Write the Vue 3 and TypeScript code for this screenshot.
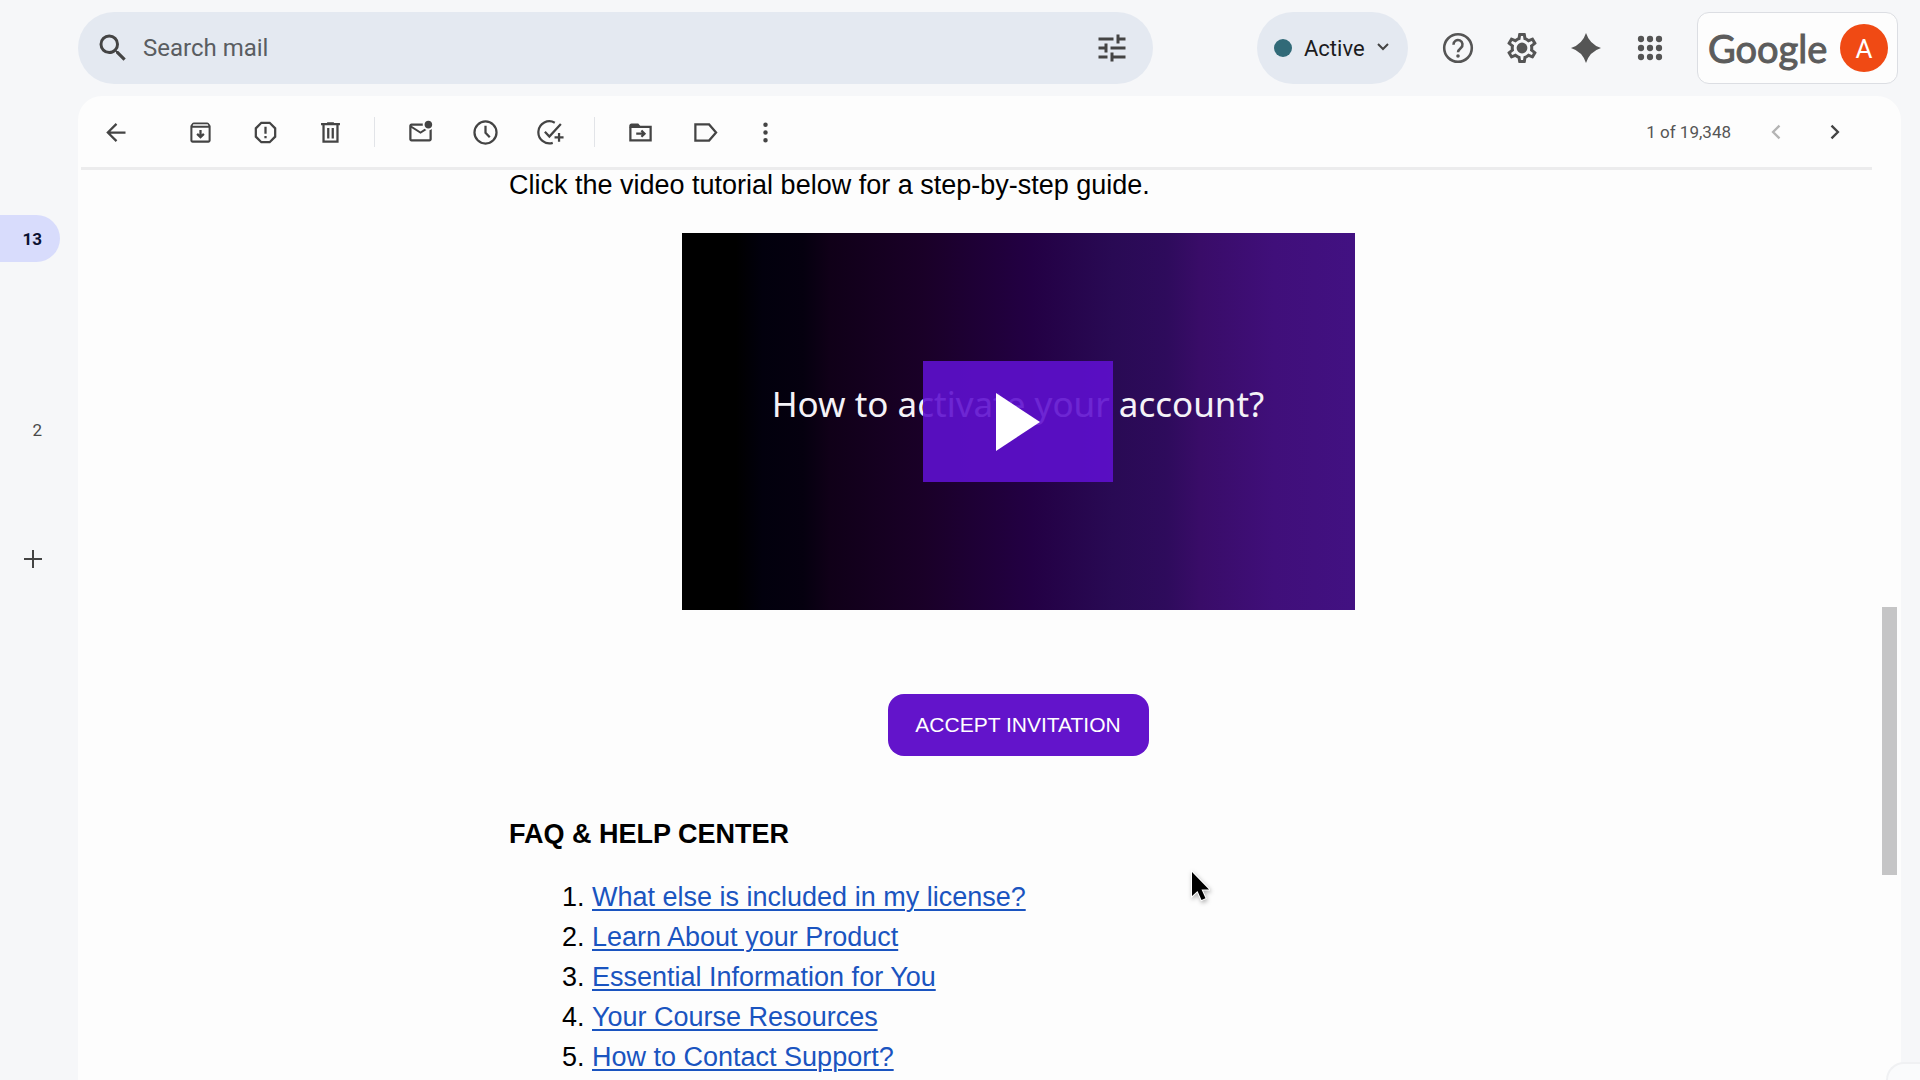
<script setup lang="ts">
import { ref } from 'vue'

interface ToolIcon {
  label: string
  fill?: string
  stroke?: string
}

const query = ref('')

const toolGroups: ToolIcon[][] = [
  [
    {
      label: 'Archive',
      fill: 'M20.54 5.23l-1.39-1.68C18.88 3.21 18.47 3 18 3H6c-.47 0-.88.21-1.16.55L3.46 5.23C3.17 5.57 3 6.02 3 6.5V19c0 1.1.9 2 2 2h14c1.1 0 2-.9 2-2V6.5c0-.48-.17-.93-.46-1.27zM5.6 4.7h12.8l.6 1.3H5l.6-1.3zM4.8 19.2V7.8h14.4v11.4z',
      stroke: 'M12 9.8v6M9 13.2l3 3 3-3',
    },
    {
      label: 'Report spam',
      stroke: 'M8.3 3.4h7.4l4.9 4.9v7.4l-4.9 4.9H8.3l-4.9-4.9V8.3zM12 6.8v6.4M12 15.2v1.8',
    },
    {
      label: 'Delete',
      stroke: 'M3.6 4.6h16.8M9 3.9h6M5.8 5v15.2h12.4V5M10 8v9.4M14 8v9.4',
    },
  ],
  [
    {
      label: 'Mark as unread',
      fill: 'M22 8.98V18c0 1.1-.9 2-2 2H4c-1.1 0-2-.9-2-2V6c0-1.1.9-2 2-2h10.1c-.06.32-.1.66-.1 1 0 .34.04.68.1 1H4l8 5 3.67-2.29c.47.43 1.02.76 1.63.98L12 13 4 8v10h16V9.9c.74-.15 1.42-.48 2-.92zM15.6 5c0 1.9 1.5 3.4 3.4 3.4s3.4-1.5 3.4-3.4-1.5-3.4-3.4-3.4-3.4 1.5-3.4 3.4z',
    },
    {
      label: 'Snooze',
      stroke: 'M12 2.2a9.8 9.8 0 1 0 0 19.6a9.8 9.8 0 1 0 0-19.6zM12 6v6.2l3.8 4',
    },
    {
      label: 'Add to tasks',
      stroke: 'M15.8 3.3A9.8 9.8 0 1 0 14 21.2M7 11.4l4 4.2L21.2 4.4M19.6 12.4v7.8M15.6 16.3h8',
    },
  ],
  [
    {
      label: 'Move to',
      fill: 'M2 6c0-1.1.9-2 2-2h6l2 2.4H10v1.6H2z',
      stroke: 'M3 7.5V19h18V7H3M8.2 13h7M12.8 10.2l2.8 2.8-2.8 2.8',
    },
    { label: 'Labels', stroke: 'M3 4.8h12.2L21.4 12l-6.2 7.2H3z' },
    {
      label: 'More',
      fill: 'M12 3.2a2 2 0 1 0 0 4a2 2 0 1 0 0-4zM12 10a2 2 0 1 0 0 4a2 2 0 1 0 0-4zM12 16.8a2 2 0 1 0 0 4a2 2 0 1 0 0-4z',
    },
  ],
]

const gear =
  'M19.43 12.98c.04-.32.07-.64.07-.98 0-.34-.03-.66-.07-.98l2.11-1.65c.19-.15.24-.42.12-.64l-2-3.46c-.09-.16-.26-.25-.44-.25-.06 0-.12.01-.17.03l-2.49 1c-.52-.4-1.08-.73-1.69-.98l-.38-2.65C14.46 2.18 14.25 2 14 2h-4c-.25 0-.46.18-.49.42l-.38 2.65c-.61.25-1.17.59-1.69.98l-2.49-1c-.06-.02-.12-.03-.18-.03-.17 0-.34.09-.43.25l-2 3.46c-.13.22-.07.49.12.64l2.11 1.65c-.04.32-.07.65-.07.98 0 .33.03.66.07.98l-2.11 1.65c-.19.15-.24.42-.12.64l2 3.46c.09.16.26.25.44.25.06 0 .12-.01.17-.03l2.49-1c.52.4 1.08.73 1.69.98l.38 2.65c.03.24.24.42.49.42h4c.25 0 .46-.18.49-.42l.38-2.65c.61-.25 1.17-.59 1.69-.98l2.49 1c.06.02.12.03.18.03.17 0 .34-.09.43-.25l2-3.46c.12-.22.07-.49-.12-.64l-2.11-1.65zm-1.98-1.71c.04.31.05.52.05.73 0 .21-.02.43-.05.73l-.14 1.13.89.7 1.08.84-.7 1.21-1.27-.51-1.04-.42-.9.68c-.43.32-.84.56-1.25.73l-1.06.43-.16 1.13-.2 1.35h-1.4l-.19-1.35-.16-1.13-1.06-.43c-.43-.18-.83-.41-1.23-.71l-.91-.7-1.06.43-1.27.51-.7-1.21 1.08-.84.89-.7-.14-1.13c-.03-.31-.05-.54-.05-.74s.02-.43.05-.73l.14-1.13-.89-.7-1.08-.84.7-1.21 1.27.51 1.04.42.9-.68c.43-.32.84-.56 1.25-.73l1.06-.43.16-1.13.2-1.35h1.39l.19 1.35.16 1.13 1.06.43c.43.18.83.41 1.23.71l.91.7 1.06-.43 1.27-.51.7 1.21-1.07.85-.89.7.14 1.13z'

const dots = [6, 12, 18].flatMap((y) => [6, 12, 18].map((x) => ({ x, y })))

const faq: string[] = [
  'What else is included in my license?',
  'Learn About your Product',
  'Essential Information for You',
  'Your Course Resources',
  'How to Contact Support?',
]
</script>

<template>
  <div class="shell">
    <header class="topbar">
      <form class="search" role="search" @submit.prevent>
        <button class="icon-btn" type="submit" aria-label="Search">
          <svg class="icon-lg" viewBox="0 0 24 24">
            <path d="M15.5 14h-.79l-.28-.27A6.471 6.471 0 0 0 16 9.5 6.5 6.5 0 1 0 9.5 16c1.61 0 3.09-.59 4.23-1.57l.27.28v.79l5 4.99L20.49 19l-4.99-5zm-6 0C7.01 14 5 11.99 5 9.5S7.01 5 9.5 5 14 7.01 14 9.5 11.99 14 9.5 14z" />
          </svg>
        </button>
        <input v-model="query" type="text" aria-label="Search mail" placeholder="Search mail" />
        <button class="icon-btn" type="button" aria-label="Search options">
          <svg class="icon-lg" viewBox="0 0 24 24">
            <path d="M3 17v2h6v-2H3zM3 5v2h10V5H3zm10 16v-2h8v-2h-8v-2h-2v6h2zM7 9v2H3v2h4v2h2V9H7zm14 4v-2H11v2h10zm-6-4h2V7h4V5h-4V3h-2v6z" />
          </svg>
        </button>
      </form>

      <button class="status" type="button">
        <span class="status-dot"></span>
        <span class="status-text">Active</span>
        <svg class="status-caret" viewBox="0 0 12 12"><path d="M1 2l5 5 5-5" /></svg>
      </button>

      <nav class="apps" aria-label="Tools">
        <button class="icon-btn" type="button" aria-label="Support">
          <svg class="icon-lg" viewBox="0 0 24 24">
            <circle cx="12" cy="12" r="9.2" fill="none" stroke="currentColor" stroke-width="1.7" />
            <path d="M9 9.8a3 3 0 1 1 4.9 2.2c-1.2 1-1.9 1.5-1.9 2.9" fill="none" stroke="currentColor" stroke-width="1.7" />
            <circle cx="12" cy="17.3" r="1.2" />
          </svg>
        </button>
        <button class="icon-btn" type="button" aria-label="Settings">
          <svg class="icon-lg" viewBox="0 0 24 24"><path :d="gear" /><circle cx="12" cy="12" r="3.6" /></svg>
        </button>
        <button class="icon-btn" type="button" aria-label="Assistant">
          <svg class="icon-lg" viewBox="0 0 24 24"><path d="M12 2Q14.4 9.600 22 12Q14.4 14.400 12 22Q9.600 14.400 2 12Q9.600 9.600 12 2z" /></svg>
        </button>
        <button class="icon-btn" type="button" aria-label="Apps">
          <svg class="icon-lg" viewBox="0 0 24 24">
            <circle v-for="d in dots" :key="`${d.x}-${d.y}`" :cx="d.x" :cy="d.y" r="2.1" />
          </svg>
        </button>
      </nav>

      <button class="account" type="button" aria-label="Google account">
        <span class="wordmark">Google</span>
        <span class="avatar">A</span>
      </button>
    </header>

    <div class="body">
      <nav class="rail" aria-label="Mailboxes">
        <a class="rail-active" href="#inbox">13</a>
        <a class="rail-count" href="#drafts">2</a>
        <button class="rail-add" type="button" aria-label="Create new label">
          <svg viewBox="0 0 20 20"><path d="M10 1v18M1 10h18" /></svg>
        </button>
      </nav>

      <main class="card">
        <div class="toolbar">
          <button class="tool back" type="button" aria-label="Back">
            <svg viewBox="0 0 24 24"><path class="line" d="M20 12H4.5M12 4.3L4.3 12l7.7 7.7" /></svg>
          </button>
          <div v-for="(group, g) in toolGroups" :key="g" class="tool-group">
            <button v-for="tool in group" :key="tool.label" class="tool" type="button" :aria-label="tool.label">
              <svg viewBox="0 0 24 24">
                <path v-if="tool.fill" :d="tool.fill" fill-rule="evenodd" />
                <path v-if="tool.stroke" class="line" :d="tool.stroke" />
              </svg>
            </button>
          </div>
          <span class="position">1 of 19,348</span>
          <button class="tool pager" type="button" aria-label="Newer" disabled>
            <svg viewBox="0 0 24 24"><path class="line" d="M15 6.5L9.5 12l5.5 5.5" /></svg>
          </button>
          <button class="tool pager" type="button" aria-label="Older">
            <svg viewBox="0 0 24 24"><path class="line" d="M9 6.5l5.5 5.5L9 17.5" /></svg>
          </button>
        </div>

        <div class="reader">
          <div class="message">
            <article class="mail">
              <p class="lead">Click the video tutorial below for a step-by-step guide.</p>
              <button class="video" type="button">
                <span class="video-title">How to activate your account?</span>
                <span class="play">
                  <svg viewBox="0 0 44 58"><path d="M0 0L44 29L0 58z" /></svg>
                </span>
              </button>
              <button class="accept" type="button">ACCEPT INVITATION</button>
              <h2>FAQ &amp; HELP CENTER</h2>
              <ol>
                <li v-for="item in faq" :key="item"><a href="#faq">{{ item }}</a></li>
              </ol>
            </article>
          </div>
          <div class="track"><span class="thumb"></span></div>
        </div>
      </main>
    </div>

    <svg class="cursor" viewBox="0 0 20 32">
      <path d="M2 2v24l5.500-5 4 9 4-1.800-4-8.700H19z" />
    </svg>
    <span class="corner"></span>
  </div>
</template>

<style>
body {
  margin: 0;
  background: #f6f7f9;
}
</style>

<style scoped>
.shell {
  position: relative;
  display: flex;
  flex-direction: column;
  height: 100vh;
  overflow: hidden;
  color: #444;
  background: #f6f7f9;
  font-family: Roboto, sans-serif;
}
button {
  padding: 0;
  border: 0;
  background: none;
  color: inherit;
  font: inherit;
}
svg {
  display: block;
  fill: currentColor;
}
.topbar {
  display: flex;
  align-items: stretch;
  height: 72px;
  padding: 12px 22px 12px 78px;
}
.search {
  display: flex;
  flex: 1;
  align-items: center;
  min-width: 0;
  margin-right: 104px;
  padding: 0 23px 0 17px;
  border-radius: 36px;
  background: #e4e9f1;
}
.search input {
  flex: 1;
  min-width: 0;
  padding: 0;
  border: 0;
  outline: 0;
  background: none;
  font: 24px/32px Roboto, sans-serif;
}
.search input::placeholder {
  color: #5a5d61;
  opacity: 1;
}
.icon-btn {
  display: flex;
  align-items: center;
  color: #555;
}
.search .icon-btn {
  color: #444;
}
.search .icon-btn:first-child {
  margin-right: 12px;
}
.icon-lg {
  width: 36px;
  height: 36px;
}
.status {
  display: flex;
  align-items: center;
  width: 151px;
  padding-left: 17px;
  border-radius: 36px;
  background: #e4e9f1;
}
.status-dot {
  width: 18px;
  height: 18px;
  margin-right: 12px;
  border-radius: 50%;
  background: #316a78;
}
.status-text {
  margin-right: 12px;
  color: #1c1c1e;
  font-size: 22px;
  line-height: 28px;
  padding-top: 2px;
}
.status-caret {
  width: 12px;
  height: 12px;
  fill: none;
  stroke: #444;
  stroke-width: 2;
}
.apps {
  display: flex;
  align-items: center;
  gap: 28px;
  margin: 0 29px 0 32px;
}
.account {
  box-sizing: border-box;
  display: flex;
  align-items: center;
  justify-content: space-between;
  width: 201px;
  padding: 0 9px 0 10px;
  border: 1px solid #dcdee3;
  border-radius: 12px;
  background: #fdfdfd;
}
.wordmark {
  color: #5c5c5c;
  font: 38px/48px Lato, sans-serif;
  -webkit-text-stroke: 1px #5c5c5c;
}
.avatar {
  width: 48px;
  height: 48px;
  border-radius: 50%;
  background: #f04a14;
  color: #fff;
  font-size: 26px;
  line-height: 50px;
}
.body {
  display: flex;
  flex: 1;
  min-height: 0;
}
.rail {
  display: flex;
  flex-direction: column;
  align-items: flex-start;
  width: 78px;
  padding-top: 119px;
  font-size: 17px;
}
.rail a {
  box-sizing: border-box;
  width: 60px;
  height: 47px;
  padding-right: 18px;
  color: #4a4a4a;
  line-height: 48px;
  text-align: right;
  text-decoration: none;
}
.rail .rail-active {
  border-radius: 0 24px 24px 0;
  background: #d8dcfc;
  color: #0c1233;
  font-weight: 700;
}
.rail .rail-count {
  margin-top: 144px;
}
.rail-add {
  margin: 96px 0 0 23px;
}
.rail-add svg {
  width: 20px;
  height: 20px;
  stroke: #444;
  stroke-width: 2;
}
.card {
  display: flex;
  flex: 1;
  flex-direction: column;
  min-width: 0;
  margin-right: 19px;
  border-radius: 24px 24px 0 0;
  background: #fdfdfd;
}
.toolbar {
  box-sizing: border-box;
  display: flex;
  align-items: center;
  height: 74px;
  margin: 0 29px 0 3px;
  padding: 1px 0 0 15px;
  border-bottom: 3px solid #ececed;
}
.tool {
  display: flex;
  justify-content: center;
  width: 40px;
  color: #444;
}
.tool svg {
  width: 27px;
  height: 27px;
}
.line {
  fill: none;
  stroke: currentColor;
  stroke-width: 2;
}
.tool-group {
  display: flex;
  align-items: center;
  gap: 25px;
}
.back {
  margin-right: 44px;
}
.tool-group + .tool-group::before {
  width: 1px;
  height: 30px;
  background: #e2e4e8;
  content: '';
}
.tool-group + .tool-group {
  margin-left: 24px;
}
.tool-group:nth-of-type(3) .tool:last-child {
  width: 30px;
}
.position {
  margin-left: auto;
  color: #555;
  font-size: 17px;
}
.pager {
  margin-left: 19px;
}
.position + .pager {
  margin-left: 25px;
}
.pager svg {
  width: 28px;
  height: 28px;
}
.pager:disabled {
  color: #b4b4b4;
}
.pager:last-child {
  margin-right: 17px;
}
.reader {
  display: flex;
  flex: 1;
  min-height: 0;
}
.message {
  display: grid;
  flex: 1;
  grid-template-columns: 431fr 1018fr 355fr;
  min-width: 0;
  overflow: hidden;
}
.mail {
  display: flex;
  grid-column: 2;
  flex-direction: column;
  color: #000;
  font: 27px/40px "Liberation Sans", Arial, sans-serif;
}
.lead {
  margin: 0 0 33px;
  line-height: 30px;
  white-space: nowrap;
}
.video {
  position: relative;
  align-self: center;
  width: 673px;
  height: 377px;
  background: linear-gradient(90deg, #000 0%, #000 8%, #02000d 12%, #05000f 18%, #100018 22%, #1a0028 36%, #230044 52%, #290a54 64%, #2e0b5c 72%, #390c68 77%, #400f7a 88%, #421182 100%);
}
.video-title {
  display: block;
  padding-bottom: 35px;
  color: #f4f2f7;
  font: 35px/40px "Noto Sans", sans-serif;
  white-space: nowrap;
}
.play {
  position: absolute;
  inset: 0;
  display: flex;
  align-items: center;
  justify-content: center;
  width: 190px;
  height: 121px;
  margin: auto;
  background: rgba(94, 15, 206, 0.9);
  color: #fff;
}
.play svg {
  width: 44px;
  height: 58px;
}
.accept {
  align-self: center;
  width: 261px;
  height: 62px;
  margin: 84px 0 58px;
  border-radius: 16px;
  background: #6314cb;
  color: #fff;
  font-size: 21px;
}
h2 {
  margin: 0 0 23px;
  font-size: 27px;
  line-height: 40px;
}
ol {
  margin: 0;
  padding-left: 83px;
}
li a {
  color: #1a54c0;
  text-decoration-thickness: 2px;
  text-underline-offset: 3px;
}
.track {
  display: grid;
  grid-template-rows: 437fr 268fr 205fr;
  width: 15px;
  margin-right: 4px;
}
.thumb {
  grid-row: 2;
  background: #c5c5c6;
}
.cursor {
  position: absolute;
  top: 870px;
  left: 1190px;
  width: 20px;
  height: 32px;
  fill: #000;
  stroke: #fff;
  stroke-width: 2;
  paint-order: stroke;
  filter: drop-shadow(1px 2px 2px rgba(0, 0, 0, 0.3));
}
.corner {
  position: absolute;
  right: 0;
  bottom: 0;
  width: 32px;
  height: 16px;
  border-top: 2px solid #f0f1f3;
  border-left: 2px solid #f0f1f3;
  border-top-left-radius: 24px;
  background: #fafbfc;
}
</style>
